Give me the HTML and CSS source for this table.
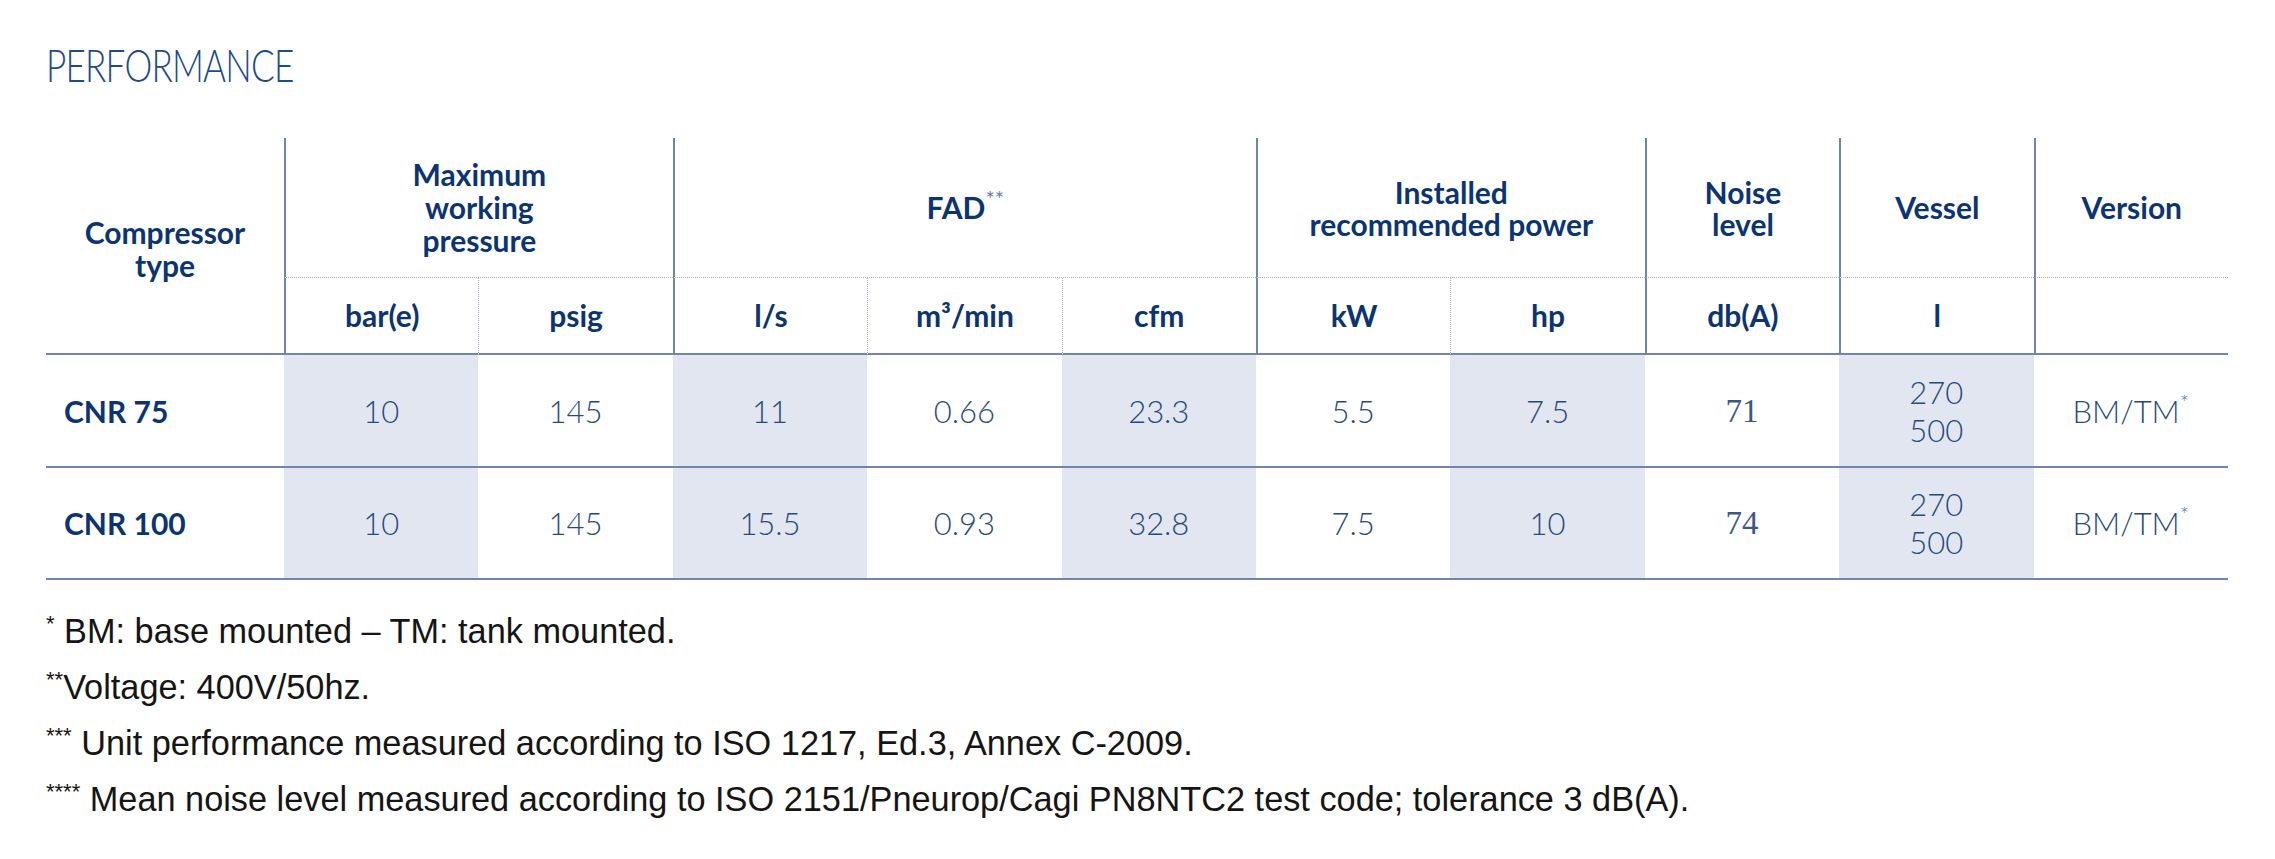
FILE: index.html
```html
<!DOCTYPE html>
<html lang="en">
<head>
<meta charset="utf-8">
<title>Performance</title>
<link rel="stylesheet" href="styles.css">
</head>
<body>
<div class="page">
  <h1 class="title"><span class="title-text">PERFORMANCE</span></h1>
  <table class="perf">
    <colgroup>
      <col class="c-type">
      <col span="10">
    </colgroup>
    <thead>
      <tr class="h1">
        <th rowspan="2" class="type">Compressor<br>type</th>
        <th colspan="2" class="grp">Maximum<br>working<br>pressure</th>
        <th colspan="3" class="grp">FAD<sup class="hstar">**</sup></th>
        <th colspan="2" class="grp tight">Installed<br>recommended power</th>
        <th class="grp tight">Noise<br>level</th>
        <th class="grp">Vessel</th>
        <th class="grp">Version</th>
      </tr>
      <tr class="h2">
        <th class="gs">bar(e)</th>
        <th class="sub">psig</th>
        <th class="gs">l/s</th>
        <th class="sub">m³/min</th>
        <th class="sub">cfm</th>
        <th class="gs">kW</th>
        <th class="sub">hp</th>
        <th class="gs">db(A)</th>
        <th class="gs">l</th>
        <th class="gs"></th>
      </tr>
    </thead>
    <tbody>
      <tr class="r1">
        <td class="model">CNR 75</td>
        <td class="shade">10</td>
        <td>145</td>
        <td class="shade">11</td>
        <td>0.66</td>
        <td class="shade">23.3</td>
        <td>5.5</td>
        <td class="shade">7.5</td>
        <td class="serif">71</td>
        <td class="shade two">270<br>500</td>
        <td>BM/TM<sup class="dstar">*</sup></td>
      </tr>
      <tr class="r2">
        <td class="model">CNR 100</td>
        <td class="shade">10</td>
        <td>145</td>
        <td class="shade">15.5</td>
        <td>0.93</td>
        <td class="shade">32.8</td>
        <td>7.5</td>
        <td class="shade">10</td>
        <td class="serif">74</td>
        <td class="shade two">270<br>500</td>
        <td>BM/TM<sup class="dstar">*</sup></td>
      </tr>
    </tbody>
  </table>
  <div class="notes">
    <p><sup>*</sup> BM: base mounted – TM: tank mounted.</p>
    <p><sup>**</sup>Voltage: 400V/50hz.</p>
    <p><sup>***</sup> Unit performance measured according to ISO 1217, Ed.3, Annex C-2009.</p>
    <p><sup>****</sup> Mean noise level measured according to ISO 2151/Pneurop/Cagi PN8NTC2 test code; tolerance 3 dB(A).</p>
  </div>
</div>
</body>
</html>
```
FILE: styles.css
```css
body {
  margin: 0;
  background: #ffffff;
}

.page {
  padding: 43px 0 0 46px;
}

.title {
  margin: 0;
  height: 44px;
  font-family: Lato, "Open Sans", sans-serif;
  font-weight: 300;
  font-size: 45px;
  line-height: 44px;
  letter-spacing: -1px;
  color: #1f4b86;
}

.title-text {
  display: inline-block;
  transform: scaleX(0.78);
  transform-origin: left center;
}

.perf {
  margin-top: 51px;
  width: 2182px;
  table-layout: fixed;
  border-collapse: separate;
  border-spacing: 0;
}

.c-type {
  width: 238px;
}

.perf th {
  padding: 0;
  font-family: Lato, "Open Sans", sans-serif;
  font-weight: 700;
  font-size: 30px;
  line-height: 33px;
  color: #0b3471;
  text-align: center;
  vertical-align: middle;
}

.perf .h1 {
  height: 140px;
}

.perf .h2 {
  height: 77px;
}

.h1 .grp {
  border-left: 2px solid #6f84a8;
  border-bottom: 1px dotted #a3acbd;
}

.h1 .tight {
  line-height: 32px;
}

.h1 .type {
  border-bottom: 2px solid #6f87ad;
  padding-top: 6px;
}

.h2 th {
  border-bottom: 2px solid #6f87ad;
}

.h2 .gs {
  border-left: 2px solid #6f84a8;
}

.h2 .sub {
  border-left: 1px dotted #a3acbd;
}

.hstar {
  font-weight: 400;
  font-size: 22px;
  color: #6680ab;
  vertical-align: 12px;
  line-height: 0;
}

.perf .r1 {
  height: 113px;
}

.perf .r2 {
  height: 112px;
}

.perf td {
  padding: 0;
  font-family: Lato, "Open Sans", sans-serif;
  font-weight: 300;
  font-size: 31px;
  line-height: 38px;
  color: #274a7d;
  text-align: center;
  vertical-align: middle;
  border-bottom: 2px solid #6f87ad;
}

.perf td.model {
  text-align: left;
  padding-left: 18px;
  font-weight: 700;
  font-size: 30px;
  color: #0b3471;
}

.perf td.shade {
  background: #e2e6f1;
}

.perf td.serif {
  font-family: "Liberation Serif", serif;
  font-weight: 400;
  font-size: 33px;
  color: #3b5886;
}

.dstar {
  font-size: 22px;
  vertical-align: 12px;
  line-height: 0;
  color: #5f7aa6;
}

.notes {
  padding-top: 23px;
}

.notes p {
  margin: 0;
  font-family: "Liberation Sans", Arial, sans-serif;
  font-size: 34.3px;
  line-height: 56px;
  color: #151515;
}

.notes sup {
  font-size: 22px;
  vertical-align: 12px;
  line-height: 0;
}
```
